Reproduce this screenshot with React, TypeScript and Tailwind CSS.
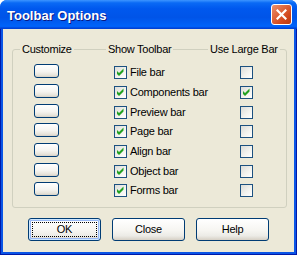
import React from "react";

const rows = [
  { label: "File bar", large: false, h: "h-[20px]" },
  { label: "Components bar", large: true, h: "h-[20px]" },
  { label: "Preview bar", large: false, h: "h-[19px]" },
  { label: "Page bar", large: false, h: "h-[20px]" },
  { label: "Align bar", large: false, h: "h-[20px]" },
  { label: "Object bar", large: false, h: "h-[19px]" },
  { label: "Forms bar", large: false, h: "h-[20px]" },
];

function Check({ checked }: { checked: boolean }) {
  return (
    <div className="w-[13px] h-[13px] border border-[#1C5180] bg-[linear-gradient(135deg,#DCDCD7_0%,#F2F2EE_55%,#FFFFFF_100%)] flex items-center justify-center">
      {checked && (
        <svg width="11" height="11" viewBox="0 0 11 11">
          <polygon points="2,4 4,6 8.5,1.5 8.5,4.5 4,9 2,7" fill="#21A121" />
        </svg>
      )}
    </div>
  );
}

function SmallButton() {
  return (
    <div className="w-[25px] h-[14px] rounded-[3px] border border-[#003C74] bg-[linear-gradient(180deg,#FFFFFF_0%,#F5F4F0_55%,#E6E3DA_85%,#D6D0C5_100%)]" />
  );
}

function DlgButton({ label, isDefault }: { label: string; isDefault?: boolean }) {
  return (
    <div
      className={
        "w-[73px] h-[23px] rounded-[3px] border border-[#003C74] bg-[linear-gradient(180deg,#FFFFFF_0%,#F6F5F1_55%,#ECEBE6_80%,#D6D0C5_100%)] flex " +
        (isDefault ? "shadow-[inset_0_0_0_1px_#CEE7FF,inset_0_0_0_2px_#98B8F6]" : "")
      }
    >
      <div
        className={
          "flex-1 m-[3px] flex items-center justify-center text-[11px] leading-none text-black " +
          (isDefault ? "border border-dotted border-[#000]" : "border border-transparent")
        }
      >
        {label}
      </div>
    </div>
  );
}

export default function App() {
  return (
    <div
      className="w-[297px] h-[255px] flex flex-col rounded-t-[7px] overflow-hidden bg-[#0058EE]"
      style={{ fontFamily: '"Liberation Sans", Arial, sans-serif' }}
    >
      <div className="h-[29px] shrink-0 flex items-center justify-between pl-[7px] pr-[5px] bg-[linear-gradient(180deg,#3D95FF_0%,#0A6AF5_10%,#0058EE_30%,#0054E8_60%,#0062F8_88%,#0060F8_92%,#0048DC_96%,#003DD0_100%)]">
        <span className="text-white font-bold text-[13px] leading-none [text-shadow:1px_1px_0_#0A1883] pt-[1px]">
          Toolbar Options
        </span>
        <div className="w-[21px] h-[21px] rounded-[3px] border border-white bg-[linear-gradient(135deg,#E9906E_0%,#E06A42_35%,#D2471C_70%,#B93A10_100%)] flex items-center justify-center">
          <svg width="11" height="11" viewBox="0 0 11 11">
            <path d="M1.5 1.5 L9.5 9.5 M9.5 1.5 L1.5 9.5" stroke="#FFFFFF" strokeWidth="2.2" strokeLinecap="square" />
          </svg>
        </div>
      </div>
      <div className="flex-1 flex flex-col border-x border-b border-[#0019A8] px-[2px] pb-[2px] bg-[#0A55E6]">
        <div className="flex-1 bg-[#ECE9D8] flex flex-col tracking-[-0.25px]">
          <div className="ml-[9px] mt-[20px] w-[275px] h-[159px] border border-[#D0D0BF] rounded-[3px] flex flex-col">
            <div className="-mt-[8px] h-[14px] flex text-[11px] leading-[14px] text-black">
              <div className="w-[93px] flex">
                <span className="ml-[7px] px-[2px] bg-[#ECE9D8]">Customize</span>
              </div>
              <div className="w-[102px] flex">
                <span className="px-[2px] bg-[#ECE9D8]">Show Toolbar</span>
              </div>
              <div className="flex-1 flex">
                <span className="px-[2px] bg-[#ECE9D8]">Use Large Bar</span>
              </div>
            </div>
            <div className="mt-[8px] flex flex-col">
              {rows.map((r) => (
                <div key={r.label} className={"flex items-start " + r.h}>
                  <div className="w-[93px] flex">
                    <div className="ml-[21px]">
                      <SmallButton />
                    </div>
                  </div>
                  <div className="w-[102px] flex items-center pt-[2px]">
                    <div className="ml-[8px]">
                      <Check checked={true} />
                    </div>
                    <span className="ml-[3px] text-[11px] leading-[13px] text-black whitespace-nowrap">{r.label}</span>
                  </div>
                  <div className="flex-1 flex pt-[2px]">
                    <div className="ml-[32px]">
                      <Check checked={r.large} />
                    </div>
                  </div>
                </div>
              ))}
            </div>
          </div>
          <div className="mt-[10px] ml-[25px] flex gap-[11px]">
            <DlgButton label="OK" isDefault />
            <DlgButton label="Close" />
            <DlgButton label="Help" />
          </div>
        </div>
      </div>
    </div>
  );
}
